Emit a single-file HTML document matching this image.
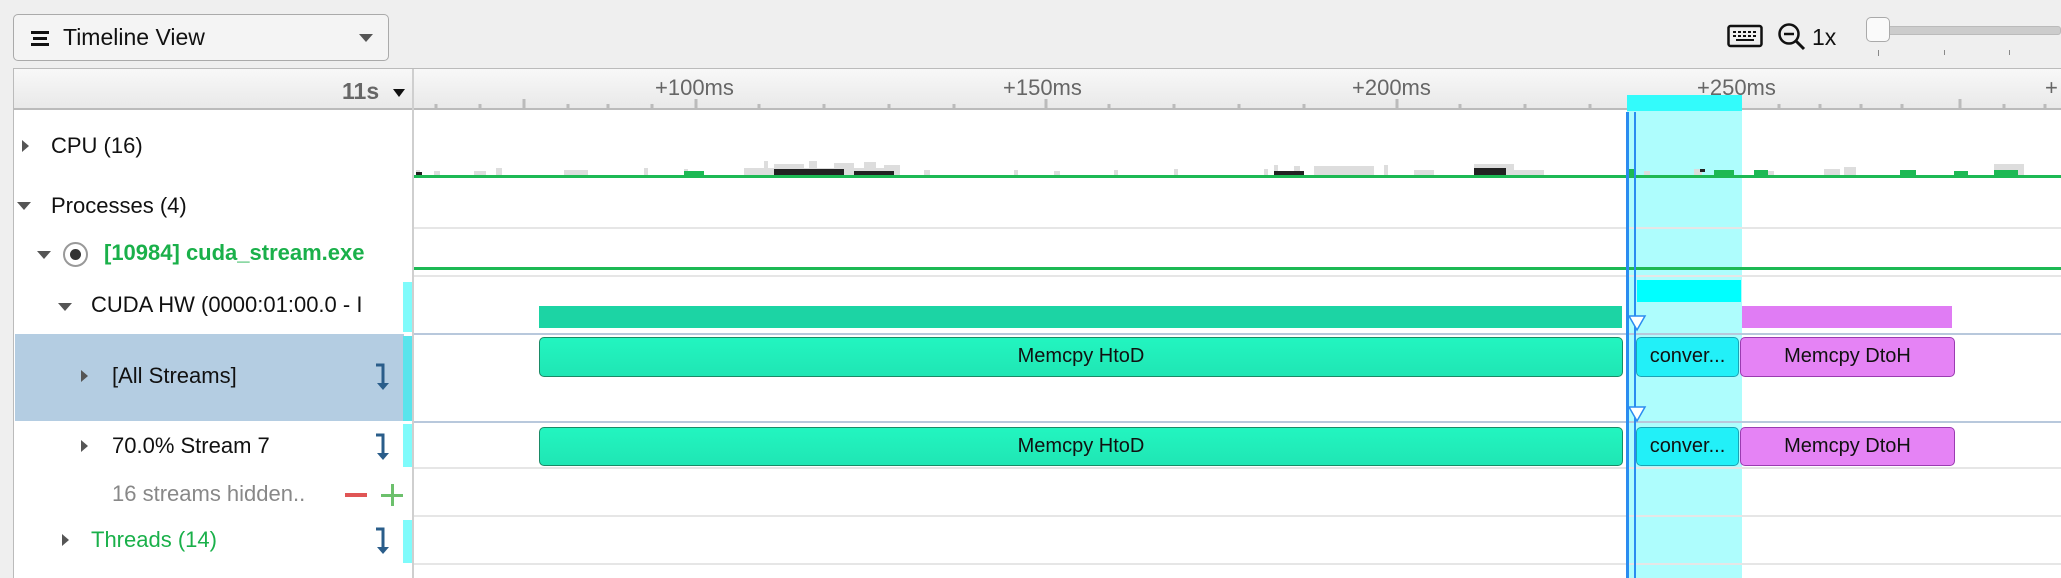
<!DOCTYPE html>
<html><head><style>
*{margin:0;padding:0;box-sizing:border-box}
body{width:2061px;height:578px;background:#efefef;font-family:"Liberation Sans",sans-serif;position:relative;overflow:hidden;color:#111}
.a{position:absolute}
.t{font-size:22px;white-space:nowrap;line-height:1}
.hl{position:absolute;left:414px;right:0;height:2px;background:#e6e6e6}
.box{position:absolute;border:1.5px solid #1a8a66;border-radius:5px;background:linear-gradient(#22f5c0,#20e6b4);font-size:20px;text-align:center;color:#111}
.mag{border-color:#9a3cb0;background:#e583f5}
.cyn{border-color:#1aa3b5;background:#22f0f8}
.tri{position:absolute;width:0;height:0}
.tr{border-top:6px solid transparent;border-bottom:6px solid transparent;border-left:7px solid #555}
.td{border-left:7px solid transparent;border-right:7px solid transparent;border-top:8px solid #555}
</style></head><body>
<div class="a" style="left:13px;top:14px;width:376px;height:47px;border:1.5px solid #aaa;border-radius:5px;background:#f4f4f4"></div>
<div class="a" style="left:31px;top:31px;width:18px;height:3px;background:#111"></div>
<div class="a" style="left:33px;top:37px;width:14px;height:3px;background:#111"></div>
<div class="a" style="left:31px;top:43px;width:18px;height:3px;background:#111"></div>
<div class="a t" style="left:63px;top:26px;font-size:23px">Timeline View</div>
<div class="tri td" style="left:359px;top:34px;border-top-color:#555"></div>
<svg class="a" style="left:1727px;top:23px" width="36" height="26"><rect x="1.5" y="3" width="33" height="20" rx="2" fill="none" stroke="#111" stroke-width="2.5"/><g fill="#111"><rect x="6" y="8" width="3" height="2"/><rect x="11" y="8" width="3" height="2"/><rect x="16" y="8" width="3" height="2"/><rect x="21" y="8" width="3" height="2"/><rect x="26" y="8" width="3" height="2"/><rect x="6" y="12" width="3" height="2"/><rect x="11" y="12" width="3" height="2"/><rect x="16" y="12" width="3" height="2"/><rect x="21" y="12" width="3" height="2"/><rect x="26" y="12" width="3" height="2"/><rect x="9" y="16" width="18" height="2"/></g></svg>
<svg class="a" style="left:1777px;top:22px" width="30" height="30"><circle cx="12" cy="12" r="9.5" fill="none" stroke="#111" stroke-width="2.5"/><line x1="7" y1="12" x2="17" y2="12" stroke="#111" stroke-width="2.5"/><line x1="19" y1="19" x2="27" y2="27" stroke="#111" stroke-width="3"/></svg>
<div class="a t" style="left:1812px;top:26px;font-size:23px">1x</div>
<div class="a" style="left:1880px;top:26px;width:181px;height:9px;background:#ccc;border:1px solid #bbb;border-radius:3px"></div>
<div class="a" style="left:1866px;top:17px;width:24px;height:25px;border:1.5px solid #aaa;border-radius:5px;background:#fafafa"></div>
<div class="a" style="left:1878px;top:50px;width:1px;height:6px;background:#888"></div>
<div class="a" style="left:1944px;top:50px;width:1px;height:5px;background:#888"></div>
<div class="a" style="left:2009px;top:50px;width:1px;height:5px;background:#888"></div>
<div class="a" style="left:13px;top:68px;right:0;bottom:0;background:#fff;border-left:1.5px solid #bbb;border-top:1.5px solid #bbb"></div>
<div class="a" style="left:14px;top:69px;right:0;height:41px;background:linear-gradient(#f8f8f8,#e9e9e9);border-bottom:2px solid #bbb"></div>
<div class="a" style="left:412px;top:69px;width:2px;bottom:0;background:#cfcfcf"></div>
<div class="a t" style="left:342px;top:80px;color:#666;font-weight:bold;font-size:23px">11s</div>
<div class="tri td" style="left:393px;top:89px;border-left-width:6px;border-right-width:6px;border-top-color:#111"></div>
<svg class="a" style="left:414px;top:95px" width="1647" height="14">
<g stroke="#bbb" stroke-width="3">
<line x1="22" y1="9" x2="22" y2="14"/><line x1="66" y1="9" x2="66" y2="14"/><line x1="110" y1="4" x2="110" y2="14"/><line x1="154" y1="9" x2="154" y2="14"/><line x1="194" y1="9" x2="194" y2="14"/><line x1="238" y1="9" x2="238" y2="14"/><line x1="282" y1="4" x2="282" y2="14"/>
<line x1="345" y1="9" x2="345" y2="14"/><line x1="410" y1="9" x2="410" y2="14"/><line x1="475" y1="9" x2="475" y2="14"/><line x1="540" y1="9" x2="540" y2="14"/><line x1="632" y1="4" x2="632" y2="14"/>
<line x1="695" y1="9" x2="695" y2="14"/><line x1="760" y1="9" x2="760" y2="14"/><line x1="825" y1="9" x2="825" y2="14"/><line x1="890" y1="9" x2="890" y2="14"/><line x1="983" y1="4" x2="983" y2="14"/>
<line x1="1046" y1="9" x2="1046" y2="14"/><line x1="1111" y1="9" x2="1111" y2="14"/><line x1="1176" y1="9" x2="1176" y2="14"/><line x1="1227" y1="9" x2="1227" y2="14"/><line x1="1268" y1="4" x2="1268" y2="14"/><line x1="1324" y1="4" x2="1324" y2="14"/>
<line x1="1365" y1="9" x2="1365" y2="14"/><line x1="1406" y1="9" x2="1406" y2="14"/><line x1="1447" y1="9" x2="1447" y2="14"/><line x1="1488" y1="9" x2="1488" y2="14"/><line x1="1546" y1="4" x2="1546" y2="14"/><line x1="1590" y1="9" x2="1590" y2="14"/><line x1="1631" y1="9" x2="1631" y2="14"/>
</g></svg>
<div class="a t" style="left:655px;top:77px;color:#666;font-size:22px">+100ms</div>
<div class="a t" style="left:1003px;top:77px;color:#666;font-size:22px">+150ms</div>
<div class="a t" style="left:1352px;top:77px;color:#666;font-size:22px">+200ms</div>
<div class="a t" style="left:1697px;top:77px;color:#666;font-size:22px">+250ms</div>
<div class="a t" style="left:2045px;top:77px;color:#666;font-size:22px">+</div>
<div class="a" style="left:1627px;top:95px;width:115px;height:16px;background:#33fbfb"></div>
<div class="a" style="left:1627px;top:111px;width:115px;bottom:0;background:#aefdfd"></div>
<div class="hl" style="top:227px"></div>
<div class="hl" style="top:275px"></div>
<div class="hl" style="top:333px;background:#b8c8dc"></div>
<div class="hl" style="top:421px;background:#b8c8dc"></div>
<div class="hl" style="top:467px"></div>
<div class="hl" style="top:515px"></div>
<div class="hl" style="top:563px"></div>
<svg class="a" style="left:414px;top:150px" width="1647" height="30">
<g fill="#ddd">
<rect x="2" y="20" width="4" height="5"/><rect x="20" y="21" width="6" height="4"/><rect x="60" y="21" width="12" height="4"/><rect x="82" y="18" width="6" height="7"/><rect x="150" y="20" width="24" height="5"/><rect x="230" y="18" width="4" height="7"/><rect x="270" y="19" width="4" height="6"/><rect x="330" y="18" width="150" height="7"/><rect x="350" y="11" width="4" height="14"/><rect x="360" y="14" width="30" height="11"/><rect x="395" y="11" width="8" height="14"/><rect x="420" y="13" width="20" height="12"/><rect x="450" y="12" width="12" height="13"/><rect x="470" y="15" width="16" height="10"/><rect x="510" y="20" width="6" height="5"/><rect x="600" y="20" width="4" height="5"/><rect x="640" y="21" width="6" height="4"/><rect x="700" y="20" width="4" height="5"/><rect x="760" y="19" width="4" height="6"/><rect x="850" y="19" width="4" height="6"/><rect x="860" y="15" width="4" height="10"/><rect x="880" y="16" width="6" height="9"/><rect x="900" y="16" width="60" height="9"/><rect x="970" y="15" width="4" height="10"/><rect x="1000" y="20" width="20" height="5"/><rect x="1060" y="14" width="40" height="11"/><rect x="1100" y="20" width="30" height="5"/><rect x="1230" y="21" width="6" height="4"/><rect x="1280" y="19" width="8" height="6"/><rect x="1350" y="21" width="10" height="4"/><rect x="1410" y="19" width="16" height="6"/><rect x="1430" y="17" width="12" height="8"/><rect x="1580" y="14" width="30" height="11"/></g>
<g fill="#222"><rect x="2" y="22" width="6" height="3"/><rect x="360" y="19" width="70" height="6"/><rect x="440" y="21" width="40" height="4"/><rect x="1060" y="18" width="32" height="7"/><rect x="860" y="21" width="30" height="4"/><rect x="1590" y="21" width="8" height="4"/><rect x="1286" y="19" width="5" height="3"/></g>
<g fill="#1db954"><rect x="0" y="25" width="1647" height="3"/><rect x="270" y="21" width="20" height="4"/><rect x="1214" y="19" width="8" height="6"/><rect x="1300" y="20" width="20" height="5"/><rect x="1340" y="20" width="14" height="5"/><rect x="1540" y="21" width="14" height="4"/><rect x="1486" y="20" width="16" height="5"/><rect x="1580" y="20" width="24" height="5"/></g>
</svg>
<div class="a" style="left:414px;top:267px;right:0;height:3px;background:#1db954"></div>
<div class="tri tr" style="left:22px;top:140px;border-left-color:#555"></div>
<div class="a t" style="left:51px;top:135px">CPU (16)</div>
<div class="tri td" style="left:17px;top:202px"></div>
<div class="a t" style="left:51px;top:195px">Processes (4)</div>
<div class="tri td" style="left:37px;top:251px"></div>
<div class="a" style="left:63px;top:242px;width:25px;height:25px;border:2px solid #999;border-radius:50%;background:#fff"></div>
<div class="a" style="left:70px;top:249px;width:11px;height:11px;border-radius:50%;background:#333"></div>
<div class="a t" style="left:104px;top:242px;color:#1ab04a;font-weight:bold;font-size:22px">[10984] cuda_stream.exe</div>
<div class="tri td" style="left:58px;top:303px"></div>
<div class="a t" style="left:91px;top:294px;width:308px;overflow:hidden">CUDA HW (0000:01:00.0 - I</div>
<div class="a" style="left:403px;top:282px;width:9px;height:50px;background:#7ffbfb"></div>
<div class="a" style="left:15px;top:334px;width:389px;height:87px;background:#b4cde2"></div>
<div class="a" style="left:403px;top:336px;width:9px;height:85px;background:#5ae4ec"></div>
<div class="tri tr" style="left:81px;top:370px"></div>
<div class="a t" style="left:112px;top:365px">[All Streams]</div>
<div class="tri tr" style="left:81px;top:440px"></div>
<div class="a t" style="left:112px;top:435px">70.0% Stream 7</div>
<div class="a" style="left:403px;top:424px;width:9px;height:43px;background:#7ffbfb"></div>
<div class="a t" style="left:112px;top:483px;color:#888">16 streams hidden..</div>
<div class="a" style="left:345px;top:493px;width:22px;height:4px;background:#e05555"></div>
<div class="a" style="left:381px;top:494px;width:22px;height:3px;background:#6cc06c"></div>
<div class="a" style="left:391px;top:484px;width:3px;height:22px;background:#6cc06c"></div>
<div class="tri tr" style="left:62px;top:534px"></div>
<div class="a t" style="left:91px;top:529px;color:#1ab04a">Threads (14)</div>
<div class="a" style="left:403px;top:520px;width:9px;height:43px;background:#7ffbfb"></div>
<svg class="a" style="left:372px;top:362px" width="20" height="30"><path d="M4 3H11V24" fill="none" stroke="#2a5d8a" stroke-width="3"/><path d="M5 21L11 28L17 21Z" fill="#2a5d8a"/></svg>
<svg class="a" style="left:372px;top:432px" width="20" height="30"><path d="M4 3H11V24" fill="none" stroke="#2a5d8a" stroke-width="3"/><path d="M5 21L11 28L17 21Z" fill="#2a5d8a"/></svg>
<svg class="a" style="left:372px;top:526px" width="20" height="30"><path d="M4 3H11V24" fill="none" stroke="#2a5d8a" stroke-width="3"/><path d="M5 21L11 28L17 21Z" fill="#2a5d8a"/></svg>
<div class="a" style="left:539px;top:306px;width:1083px;height:22px;background:#1cd4a4"></div>
<div class="a" style="left:1637px;top:280px;width:104px;height:22px;background:#00ffff"></div>
<div class="a" style="left:1742px;top:306px;width:210px;height:22px;background:#e07cf4"></div>
<div class="box" style="left:539px;top:337px;width:1084px;height:40px;line-height:37px">Memcpy HtoD</div>
<div class="box cyn" style="left:1636px;top:337px;width:103px;height:40px;line-height:37px">conver...</div>
<div class="box mag" style="left:1740px;top:337px;width:215px;height:40px;line-height:37px">Memcpy DtoH</div>
<div class="box" style="left:539px;top:427px;width:1084px;height:39px;line-height:36px">Memcpy HtoD</div>
<div class="box cyn" style="left:1636px;top:427px;width:103px;height:39px;line-height:36px">conver...</div>
<div class="box mag" style="left:1740px;top:427px;width:215px;height:39px;line-height:36px">Memcpy DtoH</div>
<div class="a" style="left:1626px;top:112px;width:3px;bottom:0;background:#2a8cf0"></div>
<div class="a" style="left:1634px;top:112px;width:2px;bottom:0;background:#2a8cf0"></div>
<svg class="a" style="left:1627px;top:314px" width="20" height="20"><path d="M2 2H18L10 16Z" fill="#fff" stroke="#2a8cf0" stroke-width="1.5"/></svg>
<svg class="a" style="left:1627px;top:405px" width="20" height="20"><path d="M2 2H18L10 16Z" fill="#fff" stroke="#2a8cf0" stroke-width="1.5"/></svg>
</body></html>
